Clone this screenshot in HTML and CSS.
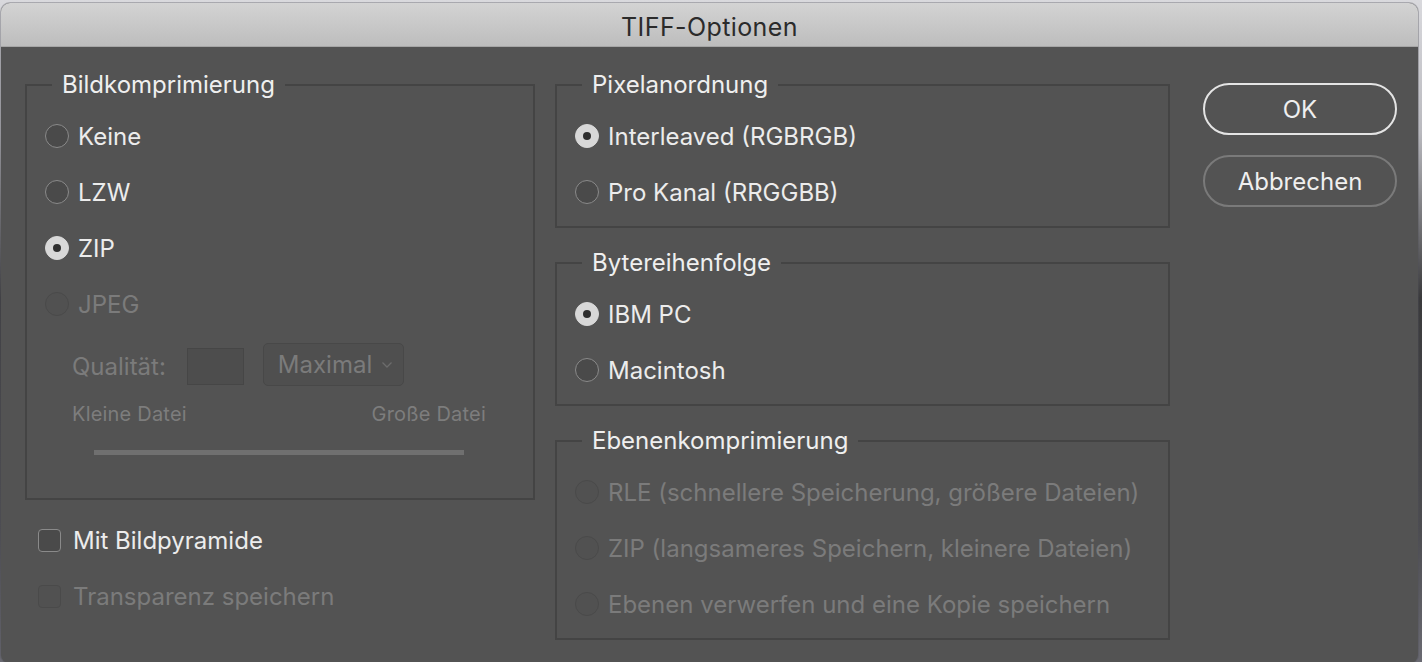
FILE: index.html
```html
<!DOCTYPE html>
<html lang="de">
<head>
<meta charset="utf-8">
<title>TIFF-Optionen</title>
<link rel="stylesheet" href="styles.css">
</head>
<body>
<div class="window">
  <div class="titlebar">TIFF-Optionen</div>
  <div class="content">
    <div class="col-left">
      <fieldset class="group group-compress">
        <legend>Bildkomprimierung</legend>
        <div class="opt"><span class="radio"></span><span>Keine</span></div>
        <div class="opt"><span class="radio"></span><span>LZW</span></div>
        <div class="opt"><span class="radio checked"></span><span>ZIP</span></div>
        <div class="opt disabled"><span class="radio"></span><span>JPEG</span></div>
        <div class="quality-row">
          <span class="q-label">Qualität:</span>
          <span class="num-box"></span>
          <span class="select">Maximal
            <svg class="chev" width="12" height="8" viewBox="0 0 12 8"><path d="M1.5 1.5 L6 6 L10.5 1.5" fill="none" stroke="#6c6c6c" stroke-width="1.3"/></svg>
          </span>
        </div>
        <div class="size-labels"><span>Kleine Datei</span><span>Große Datei</span></div>
        <div class="slider"></div>
      </fieldset>
      <div class="check"><span class="box"></span><span>Mit Bildpyramide</span></div>
      <div class="check disabled"><span class="box"></span><span>Transparenz speichern</span></div>
    </div>
    <div class="col-mid">
      <fieldset class="group">
        <legend>Pixelanordnung</legend>
        <div class="opt"><span class="radio checked"></span><span>Interleaved (RGBRGB)</span></div>
        <div class="opt"><span class="radio"></span><span>Pro Kanal (RRGGBB)</span></div>
      </fieldset>
      <fieldset class="group">
        <legend>Bytereihenfolge</legend>
        <div class="opt"><span class="radio checked"></span><span>IBM PC</span></div>
        <div class="opt"><span class="radio"></span><span>Macintosh</span></div>
      </fieldset>
      <fieldset class="group">
        <legend>Ebenenkomprimierung</legend>
        <div class="opt disabled"><span class="radio"></span><span>RLE (schnellere Speicherung, größere Dateien)</span></div>
        <div class="opt disabled"><span class="radio"></span><span>ZIP (langsameres Speichern, kleinere Dateien)</span></div>
        <div class="opt disabled"><span class="radio"></span><span>Ebenen verwerfen und eine Kopie speichern</span></div>
      </fieldset>
    </div>
    <div class="col-right">
      <button class="btn btn-default">OK</button>
      <button class="btn">Abbrechen</button>
    </div>
  </div>
</div>
</body>
</html>
```

FILE: styles.css
```css
* { box-sizing: border-box; }
html, body { margin: 0; padding: 0; }
body {
  width: 1422px;
  height: 662px;
  overflow: hidden;
  background: linear-gradient(180deg, #d9d9dd 0%, #b9b9be 20%, #3a3a3c 45%, #4c4c50 80%, #6a6a72 100%);
  font-family: "Inter", "Noto Sans", sans-serif;
}
.window {
  margin: 3px 0 0 1px;
  width: 1417px;
  height: 660px;
  background: #535353;
  border-radius: 9px 9px 8px 8px;
  overflow: hidden;
  box-shadow: 0 0 0 1px rgba(80,80,90,0.35);
}
.titlebar {
  height: 44px;
  background: linear-gradient(180deg, #d3d3d3 0%, #c6c6c6 60%, #bdbdbd 100%);
  border-bottom: 1px solid #a6a6a6;
  color: #2b2b2b;
  font-size: 25px;
  letter-spacing: 0.4px;
  line-height: 48px;
  text-align: center;
}
.content {
  display: flex;
  padding: 26px 0 0 24px;
}
.col-left { width: 510px; }
.col-mid { width: 615px; margin-left: 20px; }
.col-right {
  width: 194px;
  margin-left: 33px;
  margin-top: 10px;
  display: flex;
  flex-direction: column;
  gap: 20px;
}
.group {
  margin: 0;
  border: 2px solid #444444;
  padding: 11px 18px 6px 18px;
  min-width: 0;
}
.col-mid .group + .group { margin-top: 23px; }
.group legend {
  margin-left: 7px;
  padding: 0 10px;
  font-size: 24px;
  line-height: 24px;
  color: #efefef;
}
.group-compress { padding-bottom: 43px; }
.opt {
  height: 56px;
  display: flex;
  align-items: center;
  gap: 9px;
  font-size: 24px;
  color: #ececec;
}
.radio {
  width: 24px;
  height: 24px;
  border-radius: 50%;
  border: 1.5px solid #8a8a8a;
  background: #4a4a4a;
  flex: none;
  display: flex;
  align-items: center;
  justify-content: center;
}
.radio.checked {
  background: #d8d8d8;
  border-color: #d8d8d8;
}
.radio.checked::after {
  content: "";
  width: 8px;
  height: 8px;
  border-radius: 50%;
  background: #2f2f2f;
}
.opt.disabled { color: #7b7b7b; }
.opt.disabled .radio { border-color: #4a4a4a; background: #515151; }

.quality-row {
  margin-top: 8px;
  height: 52px;
  display: flex;
  align-items: center;
  padding-left: 27px;
  font-size: 24px;
  color: #7b7b7b;
}
.num-box {
  width: 57px;
  height: 37px;
  margin-left: 21px;
  border: 1.5px solid #464646;
  background: #4d4d4d;
}
.select {
  width: 141px;
  height: 43px;
  margin-left: 19px;
  margin-top: -4px;
  border: 1.5px solid #484848;
  border-radius: 5px;
  background: #4f4f4f;
  display: flex;
  align-items: center;
  padding-left: 14px;
  gap: 9px;
}
.chev { margin-top: 2px; }
.size-labels {
  margin-top: 12px;
  display: flex;
  justify-content: space-between;
  padding: 0 29px 0 27px;
  font-size: 20px;
  letter-spacing: 0.2px;
  line-height: 20px;
  color: #7d7d7d;
}
.slider {
  margin: 26px 0 0 49px;
  width: 370px;
  height: 5px;
  background: #707070;
}
.check {
  height: 56px;
  display: flex;
  align-items: center;
  gap: 12px;
  padding-left: 13px;
  font-size: 24px;
  color: #ececec;
}
.col-left > .group + .check { margin-top: 12px; }
.box {
  width: 23px;
  height: 23px;
  border: 1.5px solid #8a8a8a;
  border-radius: 4px;
  background: #4a4a4a;
  flex: none;
}
.check.disabled { color: #7b7b7b; }
.check.disabled .box { border-color: #4a4a4a; background: #515151; }

.btn {
  height: 52px;
  border-radius: 26px;
  background: transparent;
  border: 2px solid #7a7a7a;
  color: #efefef;
  font-family: "Inter", "Noto Sans", sans-serif;
  font-size: 24px;
  padding: 0;
}
.btn-default { border-color: #e4e4e4; }
```
